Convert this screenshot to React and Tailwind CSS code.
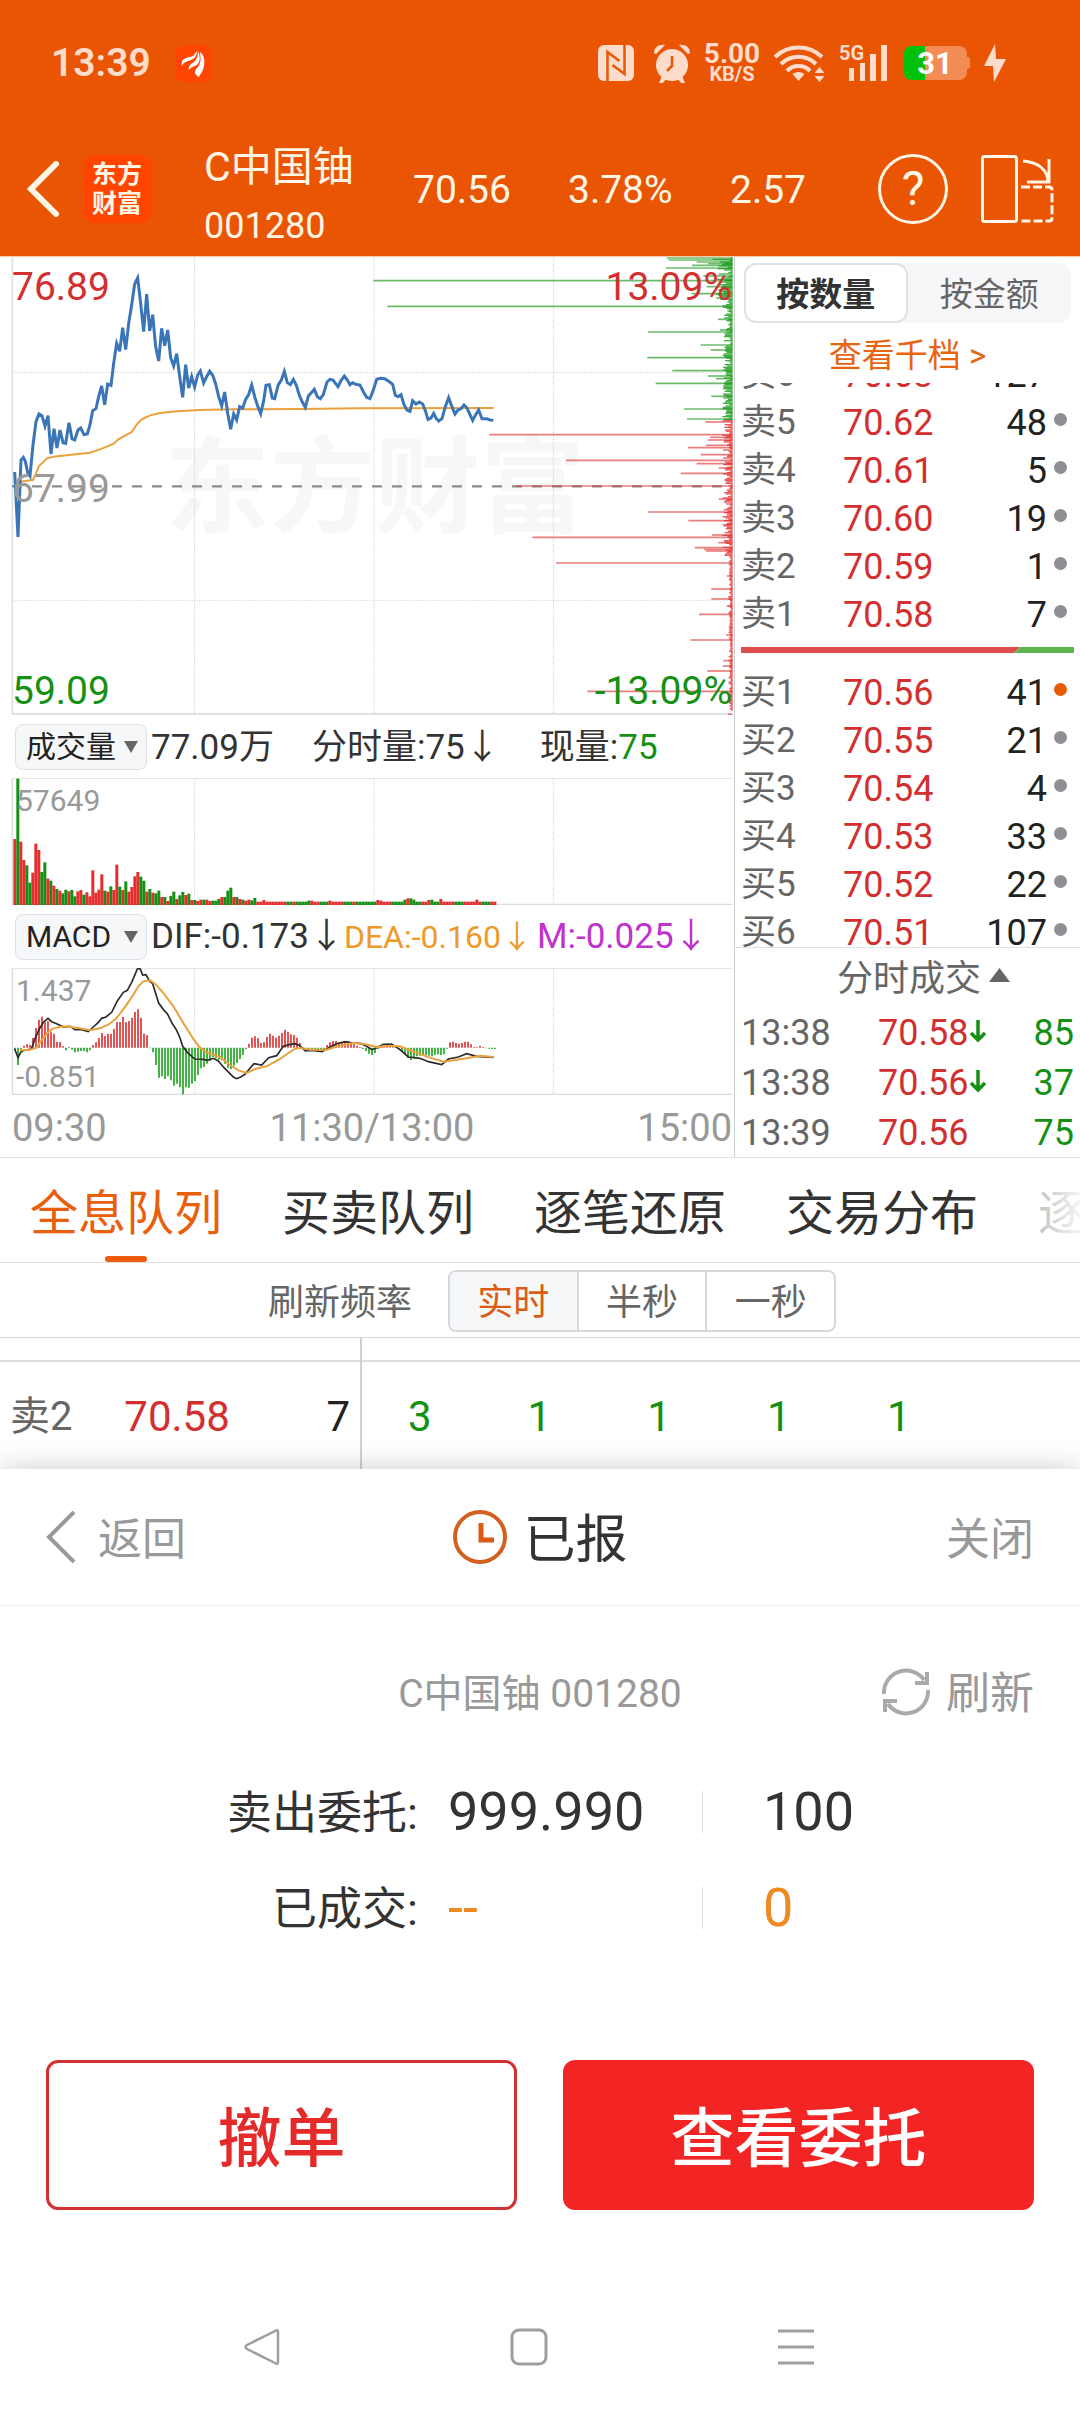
import React, { useState } from 'react';

const PRICE_LINE =
    '44,666 54,861 63,630 70,622 76,634 83,668 90,678 99,585 108,515 117,492 126,497 135,528 144,497 153,612 162,536 171,594 180,540 189,578 197,580 207,518 216,566 224,570 234,540 242,534 252,554 262,552 270,524 278,482 288,476 296,440 305,408 314,464 323,402 333,406 341,340 350,280 359,304 368,233 377,299 386,220 395,165 404,102 413,84 422,160 431,245 440,132 449,243 458,194 467,290 476,333 485,235 494,287 503,240 512,323 521,348 530,311 539,380 548,442 557,344 566,414 575,380 584,411 593,375 601,363 611,399 620,380 629,364 638,376 647,402 656,440 665,468 674,426 683,490 692,538 701,492 710,510 719,470 728,474 737,448 746,434 755,405 764,440 773,468 782,491 791,452 798,406 808,404 817,444 824,446 835,404 844,390 853,364 862,398 871,404 880,388 889,406 898,436 907,456 916,472 925,438 934,428 943,418 952,440 961,446 970,434 981,396 990,388 999,390 1014,410 1024,390 1033,378 1042,390 1050,404 1058,398 1067,403 1080,405 1090,425 1100,442 1110,446 1120,420 1130,388 1142,385 1154,386 1166,394 1178,403 1186,436 1194,440 1203,434 1212,464 1221,480 1230,484 1238,452 1248,462 1258,456 1268,462 1276,482 1284,508 1293,504 1301,490 1309,506 1316,513 1326,506 1336,470 1346,443 1356,470 1365,492 1374,480 1383,476 1392,465 1401,474 1410,494 1418,511 1427,494 1436,480 1446,506 1460,506 1470,510 1480,511';

const AVG_LINE =
    '63,695 80,692 99,690 108,670 117,648 126,640 140,626 160,620 200,616 270,608 300,598 340,582 355,568 395,546 410,524 425,508 450,496 480,489 530,484 600,480 700,478 900,477 1080,475 1481,474';

// [y, left edge] of every order depth bar, all of them end on the right axis
const SELL_DEPTH = [
    [24, 2000], [30, 2006], [36, 2090], [41, 2124], [46, 2076], [54, 1998], [92, 1120], [78, 2110], [110, 2120], [131, 2076],
    [169, 1162], [208, 2154], [240, 2160], [246, 1944], [285, 2102], [300, 2132], [323, 1942], [362, 2017], [378, 2124],
    [386, 2148], [400, 1967], [439, 2134], [477, 2052], [489, 2176], [507, 2061],
];
const BUY_DEPTH = [
    [516, 2116], [554, 1468], [562, 2130], [570, 2124], [586, 2118], [593, 2064], [614, 2102], [631, 1698], [641, 2090],
    [654, 2156], [670, 2042], [708, 1548], [747, 2156], [762, 2178], [786, 1944], [795, 2180], [812, 2065], [824, 2168],
    [855, 2136], [862, 1597], [878, 2155], [893, 2084], [898, 2112], [903, 2118], [939, 1668], [978, 2180], [1017, 2134],
    [1047, 2134], [1068, 2180], [1093, 2097], [1132, 2186], [1155, 2178], [1170, 2071], [1232, 2170], [1248, 2168],
    [1263, 2122], [1324, 1762], [1393, 2184],
];
const noise = (i) => Math.abs(Math.sin(i * 12.9898) * 43758.5453) % 1;

const VOLUME = [
    388, 207, 396, 451, 467, 519, 489, 402, 421, 487, 458, 507, 513, 528, 538, 543, 551, 540, 545, 541, 560, 545, 541, 555,
    548, 560, 482, 549, 540, 494, 543, 546, 530, 541, 465, 531, 541, 515, 546, 532, 500, 487, 501, 513, 546, 538, 549, 551,
    543, 562, 562, 574, 559, 546, 568, 557, 547, 556, 552, 571, 571, 574, 570, 570, 570, 574, 573, 573, 568, 562, 562, 543,
    534, 562, 562, 568, 570, 573, 570, 572, 565, 576, 576, 571,
];
const VOLUME_TAIL = { 98: 573, 99: 573, 105: 573, 121: 571, 122: 573, 130: 570, 131: 566, 132: 566, 133: 570, 138: 571, 139: 570, 142: 568, 154: 570 };
const VOLUME_COLORS =
    'rgrrggrrrggrgrgrggrggrrgrrrrrrgrgrrgrgrrrrggrgrggrgrggrggrgrgrrgrrgggrgggrgrgrrggrrrrrrrrrrggrgggggrrrgggrrrrrgggrgggggggrrrrrgggggrggggrrrgggrrrrrgggrrrrrrgggrrrgrr';

const MACD = [
    1022, 1066, 1020, 1008, 1004, 1006, 985, 955, 930, 921, 938, 934, 968, 972, 997, 997, 1010, 1022, 1012, 1020, 1028, 1026,
    1024, 1024, 1028, 1022, 1006, 998, 985, 970, 979, 972, 972, 958, 937, 937, 922, 938, 934, 924, 907, 899, 924, 972, 977,
    1016, 1028, 1066, 1104, 1100, 1108, 1100, 1112, 1128, 1122, 1133, 1154, 1133, 1134, 1122, 1114, 1096, 1076, 1072, 1062,
    1054, 1042, 1046, 1050, 1052, 1062, 1074, 1078, 1068, 1060, 1048, 1036, 1018, 1002, 984, 980, 986, 1000, 998, 982, 972,
    978, 984, 978, 970, 960, 966, 974, 976, 984, 1000, 1012, 1022, 1022, 1018, 1020, 1020, 1020, 1018, 1006, 998, 994, 994,
    998, 998, 994, 995, 998, 1004, 1008, 1012, 1018, 1024, 1032, 1036, 1030, 1018, 1011, 1010, 1010, 1010, 1011, 1012, 1020,
    1026, 1034, 1044, 1052, 1046, 1040, 1038, 1036, 1036, 1038, 1040, 1036, 1034, 1036, 1034, 1017, 998, 996, 1000, 1002,
    1000, 996, 996, 1004, 1012, 1012, 1008, 1012, 1016, 1017, 1018, 1018,
];
const DIF_LINE =
    '44,1018 54,1044 62,1028 72,1022 94,1018 104,990 117,960 130,938 144,926 155,936 170,942 190,952 210,950 225,960 245,960 265,966 280,952 295,938 305,926 318,922 335,908 352,874 370,848 382,842 395,818 405,795 412,778 420,776 428,796 438,795 448,814 458,822 476,880 492,902 502,912 516,940 530,962 540,985 548,1010 562,1028 584,1048 610,1049 622,1052 640,1046 655,1054 672,1074 690,1092 700,1102 710,1107 722,1102 735,1094 748,1078 762,1062 785,1066 806,1044 830,1038 850,1010 870,1004 885,1002 900,1008 916,1024 940,1022 966,1026 990,1012 1010,1002 1035,996 1060,1000 1085,1002 1100,1010 1116,1020 1130,1014 1150,1004 1175,1003 1200,1020 1225,1042 1260,1046 1285,1056 1325,1065 1345,1048 1375,1042 1400,1032 1430,1040 1481,1043';
const DEA_LINE =
    '60,1022 90,1020 110,1014 126,990 144,968 160,956 190,950 230,954 270,962 300,956 325,945 350,925 380,885 400,855 415,830 430,815 450,812 465,822 490,850 520,890 550,940 580,988 600,1014 620,1028 660,1042 690,1066 715,1082 740,1090 765,1078 800,1070 840,1048 880,1020 900,1014 930,1020 980,1020 1020,1008 1060,1000 1090,1002 1130,1012 1170,1008 1200,1010 1240,1026 1290,1044 1330,1056 1360,1052 1400,1046 1440,1038 1481,1042';

const SELLS = [
    ['卖6', '70.63', 127], ['卖5', '70.62', 48], ['卖4', '70.61', 5], ['卖3', '70.60', 19], ['卖2', '70.59', 1], ['卖1', '70.58', 7],
];
const BUYS = [
    ['买1', '70.56', 41], ['买2', '70.55', 21], ['买3', '70.54', 4], ['买4', '70.53', 33], ['买5', '70.52', 22], ['买6', '70.51', 107],
];
const TRADES = [
    ['13:38', '70.58', true, 85],
    ['13:38', '70.56', true, 37],
    ['13:39', '70.56', false, 75],
];

const StatusBar = () => (
    <div className="flex h-[126px] items-center justify-between pl-[51px] pr-[74px] text-[#fddccb]">
        <div className="flex items-center gap-6">
            <span className="text-[39px] font-semibold leading-none">13:39</span>
            <svg width="37" height="37" viewBox="0 0 37 37">
                <rect width="37" height="37" rx="9" fill="#ff4500" />
                <g fill="#fff">
                    <path d="M7 21C5 13 12 13 18 11l4-5c0 6-4 9-9 10-3 1-5 2-6 5z" />
                    <path d="M14 25c-1-4 2-6 5-8 3-3 4-6 4-11 3 7 2 13-3 15-3 1-5 2-6 4z" />
                    <path d="M24 32c-5-3-5-6-2-9 4-4 4-9 3-16 4 3 5 8 4 14-1 5-3 7-5 11z" />
                </g>
            </svg>
        </div>
        <div className="flex items-center gap-3.5">
            <svg width="42" height="38" viewBox="0 0 42 38">
                <rect x="0" y="1" width="36" height="36" rx="6" fill="currentColor" />
                <path d="M9.500 37V8l12 9M26.500 1v29l-12-9" fill="none" stroke="#ea5504" strokeWidth="2.500" />
            </svg>
            <svg width="36" height="40" viewBox="0 0 36 40" fill="currentColor">
                <circle cx="18" cy="22" r="16" />
                <path d="M0 10C0 4 5 1 11 2L2 11zM36 10c0-6-5-9-11-8l9 9zM8 33l4 3-3 4H5zM28 33l-4 3 3 4h4z" />
                <path d="M18 13v10l-5 5" fill="none" stroke="#ea5504" strokeWidth="2.500" />
            </svg>
            <div className="flex w-14 flex-col items-center font-bold leading-none">
                <span className="text-[28px] leading-[22px]">5.00</span>
                <span className="text-xl leading-[18px]">KB/S</span>
            </div>
            <svg width="51" height="38" viewBox="0 0 51 38">
                <g fill="none" stroke="currentColor" strokeWidth="4">
                    <path d="M1 13a34 34 0 0 1 47 0M7 20a25 25 0 0 1 35 0M13 27a16 16 0 0 1 23 0" />
                </g>
                <path d="M24.500 37l-6-7q6-4 12 0z" fill="currentColor" />
                <path d="M45.500 23l5 6h-10zM45.500 38l5-6h-10z" fill="currentColor" />
            </svg>
            <svg width="51" height="38" viewBox="0 0 51 38" fill="currentColor">
                <text x="0" y="16" fontSize="20" fontWeight="700">5G</text>
                <rect x="10" y="24" width="5" height="13" />
                <rect x="21" y="19" width="5" height="18" />
                <rect x="31" y="10" width="6" height="27" />
                <rect x="42" y="1" width="6" height="36" />
            </svg>
            <svg width="66" height="36" viewBox="0 0 66 36">
                <rect x="0" y="1" width="63" height="34" rx="8" fill="#f28b54" />
                <path d="M63 12h1q2 0 2 2v8q0 2-2 2h-1z" fill="#f28b54" />
                <path d="M21 1v34H8q-8 0-8-8V9q0-8 8-8z" fill="#00c20c" />
                <text x="31" y="29" fontSize="31" fontWeight="700" fill="#fff" textAnchor="middle">31</text>
            </svg>
            <svg width="22" height="38" viewBox="0 0 22 38">
                <path d="M11 0L0 22h9l1 16L22 15h-10z" fill="currentColor" />
            </svg>
        </div>
    </div>
);

const Header = () => (
    <header className="border-b border-[#f7c9ad] bg-[#ea5504]">
        <StatusBar />
        <div className="flex h-[130px] items-center pb-1 pl-[27px] pr-[26px] text-[39px] leading-none text-[#fff6e6]">
            <button aria-label="返回上一页" className="mr-6">
                <svg width="32" height="56" viewBox="0 0 32 56">
                    <path d="M29 3L4 28l25 25" fill="none" stroke="currentColor" strokeWidth="6" strokeLinecap="round" />
                </svg>
            </button>
            <div className="flex h-[68px] w-[68px] flex-col items-center justify-center rounded-xl bg-[#ff4500] text-[25px] font-bold leading-[29px]">
                <span>东方</span>
                <span>财富</span>
            </div>
            <div className="ml-[53px] flex w-[209px] flex-col pt-4 leading-[59px]">
                <h1 className="text-[41px]">C中国铀</h1>
                <span className="text-4xl leading-[59px]">001280</span>
            </div>
            <span className="w-[155px] pt-0.5">70.56</span>
            <span className="w-[162px] pt-0.5">3.78%</span>
            <span className="flex-1 pt-0.5">2.57</span>
            <button aria-label="帮助" className="flex h-[70px] w-[70px] items-center justify-center rounded-full border-3 border-current text-5xl leading-none">
                ?
            </button>
            <button aria-label="横屏" className="ml-[33px]">
                <svg width="73" height="68" viewBox="0 0 73 68" fill="none" stroke="currentColor" strokeWidth="3">
                    <rect x="1.500" y="1.500" width="34" height="65" rx="2" />
                    <path d="M42 6c16 1 25 10 25 21M68 4v23H46" />
                    <path d="M40 32h28q3 0 3 3v28q0 3-3 3H40" strokeDasharray="9 3" />
                </svg>
            </button>
        </div>
    </header>
);

const GridLines = ({ top, bottom }) => (
    <g stroke="#c9c9c9" strokeWidth="3" strokeDasharray="3 4">
        <path d={`M584 ${top}V${bottom}M1122 ${top}V${bottom}M1660 ${top}V${bottom}`} />
    </g>
);

const PriceChart = () => (
    <div className="relative">
        <div className="absolute inset-0 flex items-center justify-center pl-4 pt-1 text-[105px] font-bold leading-none text-[#f7f7f7]">东方财富</div>
        <svg viewBox="0 21 2202 1374" className="relative block h-auto w-full">
            <GridLines top={21} bottom={1392} />
            <path d="M37 367H2198M37 1051H2198" stroke="#d0d0d0" strokeWidth="3" strokeDasharray="3 4" />
            <path d="M37 21V1392" stroke="#e0e0e0" strokeWidth="5" />
            <path d="M37 1392H2198" stroke="#d6d6d6" strokeWidth="5" />
            <path d="M36 709H2198" stroke="#8c8c8c" strokeWidth="7" strokeDasharray="30 30" />
            <g stroke="#1f991f" strokeWidth="5" opacity="0.65">
                {SELL_DEPTH.map(([y, x]) => <path key={y} d={`M${x} ${y}H2197`} />)}
            </g>
            <g stroke="#e03a3a" strokeWidth="5" opacity="0.65">
                {BUY_DEPTH.map(([y, x]) => <path key={y} d={`M${x} ${y}H2197`} />)}
            </g>
            {/* small orders hugging the right axis */}
            {Array.from({ length: 340 }, (_, i) => {
                const y = 24 + i * 4;
                const size = y < 60 ? 60 : y < 150 ? 45 : y < 920 ? 26 : 8;
                return (
                    <path
                        key={i}
                        d={`M${2193 - noise(i) * size} ${y}H2198`}
                        stroke={y < 511 ? '#169916' : '#e52f2f'}
                        strokeWidth="4"
                        opacity="0.8"
                    />
                );
            })}
            <polyline points={AVG_LINE} fill="none" stroke="#e9a23b" strokeWidth="6" />
            <polyline points={PRICE_LINE} fill="none" stroke="#3a75b8" strokeWidth="9" />
        </svg>
        <div className="absolute inset-0 flex flex-col justify-between pb-1 pl-3 pr-[2px] pt-[10px] text-[39px] leading-[40px]">
            <div className="flex justify-between text-[#d23030]">
                <span>76.89</span>
                <span>13.09%</span>
            </div>
            <span className="text-[#999]">67.99</span>
            <div className="flex justify-between text-[#149114]">
                <span>59.09</span>
                <span>-13.09%</span>
            </div>
        </div>
    </div>
);

const IndicatorSelect = ({ label, options }) => (
    <div className="relative mr-1 shrink-0">
        <select
            aria-label={label}
            className="block h-[46px] w-[132px] appearance-none rounded-lg border border-[#dde0e6] bg-[#f6f7f9] pl-[10px] text-[30px] leading-none text-[#222]"
        >
            {options.map((o) => <option key={o}>{o}</option>)}
        </select>
        <svg width="14" height="12" viewBox="0 0 14 12" className="pointer-events-none absolute right-[9px] top-[17px]">
            <path d="M0 0h14L7 12z" fill="#666" />
        </svg>
    </div>
);

const VolumeChart = () => (
    <div className="relative">
        <svg viewBox="0 205 2202 381" className="block h-auto w-full">
            <path d="M37 206H2198" stroke="#e0e0e0" strokeWidth="3" />
            <path d="M37 206V584H2198" fill="none" stroke="#dcdcdc" strokeWidth="4" />
            <GridLines top={206} bottom={584} />
            {Array.from({ length: 161 }, (_, i) => {
                const y = VOLUME[i] ?? VOLUME_TAIL[i] ?? 576;
                return <rect key={i} x={40 + i * 9} y={y} width="9" height={586 - y} fill={VOLUME_COLORS[i] === 'g' ? '#149114' : '#e52f2f'} />;
            })}
        </svg>
        <span className="absolute left-4 top-[9px] text-3xl leading-[28px] text-[#999]">57649</span>
    </div>
);

const MacdChart = () => (
    <div className="relative">
        <svg viewBox="0 775 2202 381" className="block h-auto w-full">
            <path d="M37 776H2198" stroke="#e0e0e0" strokeWidth="3" />
            <path d="M37 776V1154H2198" fill="none" stroke="#dcdcdc" strokeWidth="4" />
            <GridLines top={776} bottom={1154} />
            {MACD.map((y, i) => (
                <path key={i} d={`M${45 + i * 9} 1014V${y}`} stroke={y > 1014 ? '#1fa51f' : '#dd3333'} strokeWidth="5" />
            ))}
            <polyline points={DIF_LINE} fill="none" stroke="#2b2b2b" strokeWidth="5" />
            <polyline points={DEA_LINE} fill="none" stroke="#e9a23b" strokeWidth="6" />
        </svg>
        <div className="absolute inset-0 flex flex-col justify-between pb-1 pl-4 pt-[9px] text-3xl leading-[28px] text-[#999]">
            <span>1.437</span>
            <span>-0.851</span>
        </div>
    </div>
);

const ChartPanel = () => (
    <section className="min-w-0 flex-1">
        <PriceChart />
        <div className="flex h-[63px] items-center whitespace-nowrap pl-[15px] text-[35px] leading-none text-[#333]">
            <IndicatorSelect label="成交量指标" options={['成交量', '成交额']} />
            <span className="pt-0.5">77.09万</span>
            <span className="ml-[38px] pt-0.5">分时量:75↓</span>
            <span className="ml-10 pt-0.5">现量:<span className="text-[#149114]">75</span></span>
        </div>
        <VolumeChart />
        <div className="flex h-[63px] items-center whitespace-nowrap pl-[15px] text-[35px] leading-none text-[#333]">
            <IndicatorSelect label="技术指标" options={['MACD', 'KDJ', 'RSI']} />
            <span>DIF:-0.173↓</span>
            <span className="text-[32px] text-[#ec9a2a]">DEA:-0.160↓</span>
            <span className="ml-1 text-[#c032cc]">M:-0.025↓</span>
        </div>
        <MacdChart />
        <div className="flex h-[62px] items-center justify-between pl-3 pr-[2px] pt-1 text-[38px] leading-none text-[#999]">
            <span>09:30</span>
            <span>11:30/13:00</span>
            <span>15:00</span>
        </div>
    </section>
);

const BookTable = ({ rows, hot }) => (
    <table className="w-full shrink-0 table-fixed text-4xl leading-none">
        <tbody>
            {rows.map(([name, price, qty]) => (
                <tr key={name} className="h-12">
                    <td className="w-[102px] p-0 pt-[3px] text-[35px] text-[#666]">{name}</td>
                    <td className="p-0 pt-[3px] text-[#d23030]">{price}</td>
                    <td className="p-0 pt-[3px] text-right text-[#222]">{qty}</td>
                    <td className="w-[27px] p-0">
                        <span className={`mx-auto mb-1 block h-[13px] w-[13px] rounded-full ${name === hot ? 'bg-[#e85a04]' : 'bg-[#8e8e93]'}`} />
                    </td>
                </tr>
            ))}
        </tbody>
    </table>
);

const OrderBook = () => {
    const [mode, setMode] = useState('按数量');
    return (
        <section className="flex w-[346px] shrink-0 flex-col border-l border-[#d0d0d0]">
            <div className="mx-[9px] mt-[6px] grid h-[60px] grid-cols-2 rounded-xl bg-[#f7f7f9] text-[33px] leading-none">
                {['按数量', '按金额'].map((m) => (
                    <button
                        key={m}
                        onClick={() => setMode(m)}
                        className={m === mode ? 'rounded-xl border-2 border-[#e2e2e2] bg-white pt-[3px] font-bold text-[#333]' : 'pt-[3px] text-[#666]'}
                    >
                        {m}
                    </button>
                ))}
            </div>
            <a href="#depth" className="flex h-[60px] items-center justify-center pt-1 text-[33px] leading-none text-[#e8650f]">查看千档 &gt;</a>
            <div className="flex h-[254px] flex-col justify-end overflow-hidden px-[6px]">
                <BookTable rows={SELLS} />
            </div>
            <svg viewBox="0 0 333 6" className="mx-[6px] mt-[10px] block h-auto">
                <path d="M0 0H279L273 6H0z" fill="#df4d4d" />
                <path d="M279 0H333V6H273z" fill="#5fb54d" />
            </svg>
            <div className="mt-[14px] h-[280px] overflow-hidden px-[6px]">
                <BookTable rows={BUYS} hot="买1" />
            </div>
            <div className="flex h-[59px] items-center justify-center gap-2 border-t border-[#e2e2e2] pl-8 pt-1 text-4xl leading-none text-[#666]">
                <span>分时成交</span>
                <svg width="21" height="14" viewBox="0 0 21 14" className="mb-2"><path d="M10.500 0L21 14H0z" fill="#666" /></svg>
            </div>
            <table className="mx-[6px] table-fixed text-4xl leading-none">
                <tbody>
                    {TRADES.map(([time, price, down, qty], i) => (
                        <tr key={i} className="h-[50px]">
                            <td className="w-[137px] p-0 pt-1 text-[#666]">{time}</td>
                            <td className="p-0 pt-1 text-[#d23030]">
                                <span className="flex items-center gap-[2px]">
                                    {price}
                                    {down && (
                                        <svg width="16" height="26" viewBox="0 0 16 26" fill="none" stroke="#149114" strokeWidth="3.500">
                                            <path d="M8 0v20M1 13l7 7 7-7" />
                                        </svg>
                                    )}
                                </span>
                            </td>
                            <td className="w-[60px] p-0 pt-1 text-right text-[#149114]">{qty}</td>
                        </tr>
                    ))}
                </tbody>
            </table>
        </section>
    );
};

const QueueTabs = () => {
    const [tab, setTab] = useState('全息队列');
    return (
        <nav className="relative flex h-[106px] gap-[60px] overflow-hidden whitespace-nowrap border-y border-[#e2e2e2] pl-[30px] text-5xl leading-none">
            {['全息队列', '买卖队列', '逐笔还原', '交易分布', '逐笔成交'].map((t) => (
                <button key={t} onClick={() => setTab(t)} className={`relative shrink-0 pt-[7px] ${t === tab ? 'text-[#e8600c]' : 'text-[#333]'}`}>
                    {t}
                    {t === tab && <span className="absolute bottom-0 left-1/2 -ml-[21px] h-[6px] w-[42px] rounded-full bg-[#f05a0c]" />}
                </button>
            ))}
            <div className="absolute inset-y-0 right-0 w-[60px] bg-gradient-to-r from-white/60 to-white/95" />
        </nav>
    );
};

const RefreshRate = () => {
    const [rate, setRate] = useState('实时');
    return (
        <div className="flex h-[74px] items-center justify-center pl-6 pt-px text-4xl leading-none text-[#666]">
            <span className="mr-9 pt-1">刷新频率</span>
            <div className="flex h-[62px] w-[388px] divide-x-2 divide-[#d5d8dd] overflow-hidden rounded-lg border-2 border-[#d5d8dd]">
                {['实时', '半秒', '一秒'].map((r) => (
                    <button key={r} onClick={() => setRate(r)} className={`flex-1 pt-1 ${r === rate ? 'bg-[#f6f7f9] text-[#dd5a12]' : ''}`}>
                        {r}
                    </button>
                ))}
            </div>
        </div>
    );
};

const QueueTable = () => (
    <table className="w-full table-fixed border-t border-[#d5d7dc] text-[40px] leading-none">
        <tbody>
            <tr className="h-[23px] border-b-2 border-[#dcdee2]">
                <td colSpan={3} className="w-[361px] border-r-2 border-[#d0d0d6] p-0" />
                <td colSpan={6} className="p-0" />
            </tr>
            <tr className="h-[108px]">
                <td className="w-[124px] p-0 pl-[10px] pt-1 text-[40px] text-[#666]">卖2</td>
                <td className="w-[120px] p-0 pl-1 pt-1 text-[42px] text-[#d23030]">70.58</td>
                <td className="w-[118px] border-r-2 border-[#d0d0d6] p-0 pr-[10px] pt-1 text-right text-[42px] text-[#222]">7</td>
                {[3, 1, 1, 1, 1].map((n, i) => (
                    <td key={i} className="w-[120px] p-0 pr-[3px] pt-1 text-center text-[42px] text-[#149114]">{n}</td>
                ))}
                <td className="p-0" />
            </tr>
        </tbody>
    </table>
);

const SystemNav = () => (
    <nav className="flex justify-between pb-12 pl-[243px] pr-[265px] pt-[118px] text-[#9e9e9e]">
        <button aria-label="返回">
            <svg width="37" height="38" viewBox="0 0 37 38" fill="none" stroke="currentColor" strokeWidth="2.500" strokeLinejoin="round">
                <path d="M35 4v30q0 3-3 1L4 21q-3-2 0-4L32 3q3-2 3 1z" />
            </svg>
        </button>
        <button aria-label="主页">
            <svg width="38" height="38" viewBox="0 0 38 38" fill="none" stroke="currentColor" strokeWidth="3">
                <rect x="2" y="2" width="34" height="34" rx="7" />
            </svg>
        </button>
        <button aria-label="最近任务">
            <svg width="38" height="38" viewBox="0 0 38 38" stroke="currentColor" strokeWidth="3">
                <path d="M1 3h36M1 19h36M1 35h36" />
            </svg>
        </button>
    </nav>
);

const OrderSheet = () => (
    <section className="relative bg-white shadow-[0_0_28px_rgba(0,0,0,0.2)]">
        <div className="flex h-[137px] items-center justify-between border-b border-[#ececec] px-[46px] text-[44px] leading-none text-[#999]">
            <button className="flex flex-1 items-center gap-[22px] text-left">
                <svg width="30" height="52" viewBox="0 0 30 52" fill="none" stroke="currentColor" strokeWidth="4">
                    <path d="M28 1L3 26l25 25" />
                </svg>
                <span className="pt-[7px]">返回</span>
            </button>
            <h2 className="flex items-center gap-[17px] text-[52px] text-[#333]">
                <svg width="54" height="54" viewBox="0 0 54 54" fill="none" stroke="#d2601f" strokeWidth="4">
                    <circle cx="27" cy="27" r="25" />
                    <path d="M28 13v17h13" stroke="#dd5a12" strokeWidth="5" />
                </svg>
                <span className="pt-[9px]">已报</span>
            </h2>
            <button className="flex-1 pt-[7px] text-right">关闭</button>
        </div>

        <div className="flex items-center px-[46px] pt-[62px] leading-none text-[#999]">
            <span className="flex-1" />
            <span className="pt-1.5 text-[39px]">C中国铀 001280</span>
            <button className="flex flex-1 items-center justify-end gap-4 text-[44px]">
                <svg width="48" height="48" viewBox="0 0 48 48" fill="none" stroke="#aaa" strokeWidth="4">
                    <path d="M2 26A22 22 0 0 1 42 12M46 22A22 22 0 0 1 6 36" />
                    <path d="M45 4v11H33M3 44V33h12" />
                </svg>
                <span className="pt-1">刷新</span>
            </button>
        </div>

        <dl className="mt-12 text-[54px] leading-none text-[#333]">
            <div className="flex h-24 items-center">
                <dt className="w-[418px] pt-1 text-right text-[45px]">卖出委托:</dt>
                <dd className="ml-[30px] w-[254px]">999.990</dd>
                <dd className="flex h-[42px] items-center border-l border-[#ddd] pl-[60px]">100</dd>
            </div>
            <div className="flex h-24 items-center">
                <dt className="w-[418px] pt-1 text-right text-[45px]">已成交:</dt>
                <dd className="ml-[30px] w-[254px] text-[#ee8a22]">--</dd>
                <dd className="flex h-[42px] items-center border-l border-[#ddd] pl-[60px] text-[#ee8a22]">0</dd>
            </div>
        </dl>

        <div className="grid grid-cols-2 gap-[46px] px-[46px] pt-[104px] text-[64px] font-medium leading-none">
            <button className="h-[150px] rounded-xl border-3 border-[#d03232] pt-[10px] text-[#e52a2a]">撤单</button>
            <button className="h-[150px] rounded-xl bg-[#f32424] pt-[10px] text-white">查看委托</button>
        </div>
        <SystemNav />
    </section>
);

const App = () => (
    <div className="min-h-screen overflow-x-hidden bg-white font-[Roboto,'Noto_Sans_CJK_SC',sans-serif]">
        <Header />
        <main>
            <div className="flex">
                <ChartPanel />
                <OrderBook />
            </div>
            <QueueTabs />
            <RefreshRate />
            <QueueTable />
            <OrderSheet />
        </main>
    </div>
);

export default App;
